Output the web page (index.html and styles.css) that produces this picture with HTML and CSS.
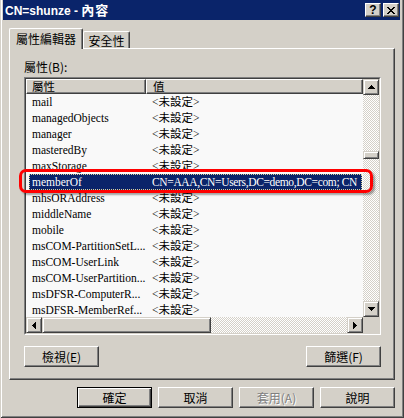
FILE: index.html
```html
<!DOCTYPE html>
<html lang="zh-Hant">
<head>
<meta charset="utf-8">
<title>CN=shunze - 內容</title>
<link rel="stylesheet" href="styles.css">
</head>
<body>
<div class="window">
  <div class="titlebar">
    <div class="title"><span class="lat">CN=shunze - </span><span class="cjk">內容</span></div>
    <div class="caption-btns">
      <div class="cbtn help">?</div>
      <div class="cbtn close">
        <svg width="8" height="7" viewBox="0 0 8 7" shape-rendering="crispEdges"><path fill="#000" d="M0 0h2v1h-2z M6 0h2v1h-2z M1 1h2v1h-2z M5 1h2v1h-2z M2 2h4v1h-4z M3 3h2v1h-2z M2 4h4v1h-4z M1 5h2v1h-2z M5 5h2v1h-2z M0 6h2v1h-2z M6 6h2v1h-2z"/></svg>
      </div>
    </div>
  </div>
  <div class="content">
    <div class="tabs">
      <div class="tab active">屬性編輯器</div>
      <div class="tab inactive">安全性</div>
    </div>
    <div class="panel">
      <div class="label">屬性(B):</div>
      <div class="list">
        <div class="list-inner">
          <div class="list-main">
            <div class="header">
              <div class="hcell c1">屬性</div>
              <div class="hcell c2">值</div>
            </div>
            <div class="rows">
              <div class="row"><span class="c1">mail</span><span class="c2">&lt;未設定&gt;</span></div>
              <div class="row"><span class="c1">managedObjects</span><span class="c2">&lt;未設定&gt;</span></div>
              <div class="row"><span class="c1">manager</span><span class="c2">&lt;未設定&gt;</span></div>
              <div class="row"><span class="c1">masteredBy</span><span class="c2">&lt;未設定&gt;</span></div>
              <div class="row"><span class="c1">maxStorage</span><span class="c2">&lt;未設定&gt;</span></div>
              <div class="row sel"><span class="c1">memberOf</span><span class="c2">CN=AAA,CN=Users,DC=demo,DC=com; CN</span></div>
              <div class="row"><span class="c1">mhsORAddress</span><span class="c2">&lt;未設定&gt;</span></div>
              <div class="row"><span class="c1">middleName</span><span class="c2">&lt;未設定&gt;</span></div>
              <div class="row"><span class="c1">mobile</span><span class="c2">&lt;未設定&gt;</span></div>
              <div class="row"><span class="c1">msCOM-PartitionSetL...</span><span class="c2">&lt;未設定&gt;</span></div>
              <div class="row"><span class="c1">msCOM-UserLink</span><span class="c2">&lt;未設定&gt;</span></div>
              <div class="row"><span class="c1">msCOM-UserPartition...</span><span class="c2">&lt;未設定&gt;</span></div>
              <div class="row"><span class="c1">msDFSR-ComputerR...</span><span class="c2">&lt;未設定&gt;</span></div>
              <div class="row"><span class="c1">msDFSR-MemberRef...</span><span class="c2">&lt;未設定&gt;</span></div>
            </div>
          </div>
          <div class="vscroll">
            <div class="sbtn"><svg width="7" height="4" viewBox="0 0 7 4" shape-rendering="crispEdges"><path fill="#000" d="M3 0h1v1h1v1h1v1h1v1H0V3h1V2h1V1h1z"/></svg></div>
            <div class="vtrack"><div class="sthumb vthumb"></div></div>
            <div class="sbtn"><svg width="7" height="4" viewBox="0 0 7 4" shape-rendering="crispEdges"><path fill="#000" d="M0 0h7v1H6v1H5v1H4v1H3V3H2V2H1V1H0z"/></svg></div>
          </div>
          <div class="hscroll">
            <div class="sbtn"><svg width="4" height="7" viewBox="0 0 4 7" shape-rendering="crispEdges"><path fill="#000" d="M3 0h1v7H3V6H2V5H1V4H0V3h1V2h1V1h1z"/></svg></div>
            <div class="sthumb hthumb"></div>
            <div class="htrack"></div>
            <div class="sbtn"><svg width="4" height="7" viewBox="0 0 4 7" shape-rendering="crispEdges"><path fill="#000" d="M0 0h1v1h1v1h1v1h1v1H3v1H2v1H1v1H0z"/></svg></div>
          </div>
          <div class="corner"></div>
        </div>
        <div class="highlight"></div>
      </div>
      <div class="panel-btns">
        <div class="btn">檢視(E)</div>
        <div class="btn">篩選(F)</div>
      </div>
    </div>
    <div class="dialog-btns">
      <div class="btn default">確定</div>
      <div class="btn">取消</div>
      <div class="btn disabled">套用(A)</div>
      <div class="btn">說明</div>
    </div>
  </div>
</div>
</body>
</html>
```

FILE: styles.css
```css
* { box-sizing: border-box; }
html, body { margin: 0; padding: 0; }
body {
  width: 404px;
  height: 418px;
  overflow: hidden;
  background: #d4d0c8;
  font-family: "Noto Sans CJK TC", "Liberation Sans", sans-serif;
  font-size: 12px;
  color: #000;
}
.window {
  width: 404px;
  height: 418px;
  padding: 0 4px 4px 3px;
  display: flex;
  flex-direction: column;
  background: #d4d0c8;
  box-shadow: inset 1px 0 #d4d0c8, inset -1px -1px #404040, inset 2px 0 #fff, inset -2px -2px #808080;
}
.titlebar {
  height: 20px;
  flex: none;
  background: #0a246a;
  display: flex;
  align-items: center;
  padding: 0 1px 0 2px;
  color: #fff;
}
.title { flex: 1; white-space: nowrap; line-height: 20px; }
.title .lat {
  font: bold 12px "Liberation Sans", sans-serif;
}
.title .cjk {
  font: bold 13px "Noto Sans CJK TC", sans-serif;
  letter-spacing: 1px;
}
.caption-btns { display: flex; gap: 2px; }
.cbtn {
  width: 16px;
  height: 14px;
  background: #d4d0c8;
  border: 1px solid;
  border-color: #fff #404040 #404040 #fff;
  box-shadow: inset -1px -1px #808080;
  display: flex;
  align-items: center;
  justify-content: center;
  color: #000;
}
.cbtn.help {
  font: bold 12px "Liberation Sans", sans-serif;
  line-height: 12px;
}
.content {
  flex: 1;
  display: flex;
  flex-direction: column;
  padding: 8px 5px 0 6px;
}
.tabs {
  display: flex;
  align-items: flex-end;
  height: 20px;
  flex: none;
}
.tab {
  background: #d4d0c8;
  border-top: 1px solid #fff;
  border-left: 1px solid #fff;
  border-right: 1px solid #404040;
  box-shadow: inset -1px 0 #808080;
  border-radius: 2px 2px 0 0;
  text-align: center;
  white-space: nowrap;
}
.tab.active {
  width: 74px;
  height: 21px;
  margin-bottom: -1px;
  line-height: 20px;
  position: relative;
  z-index: 1;
}
.tab.inactive {
  width: 47px;
  height: 17px;
  line-height: 17px;
}
.panel {
  flex: none;
  height: 332px;
  border: 1px solid;
  border-color: #fff #404040 #404040 #fff;
  box-shadow: inset -1px -1px #808080;
  padding: 11px 13px 12px 14px;
  display: flex;
  flex-direction: column;
}
.label { height: 14px; line-height: 14px; }
.list {
  position: relative;
  margin-top: 3px;
  width: 357px;
  height: 258px;
  border: 1px solid;
  border-color: #808080 #fff #fff #808080;
}
.list-inner {
  width: 355px;
  height: 256px;
  border: 1px solid;
  border-color: #404040 #d4d0c8 #d4d0c8 #404040;
  display: grid;
  grid-template-columns: 337px 16px;
  grid-template-rows: 238px 16px;
}
.list-main {
  background: #f9f9f9;
  overflow: hidden;
  display: flex;
  flex-direction: column;
}
.header { display: flex; height: 15px; flex: none; }
.hcell {
  height: 15px;
  background: #d4d0c8;
  border: 1px solid;
  border-color: #fff #404040 #404040 #fff;
  box-shadow: inset -1px -1px #808080;
  font-size: 11.5px;
  line-height: 13px;
  padding-left: 5px;
  white-space: nowrap;
}
.hcell.c1 { width: 120px; }
.hcell.c2 { flex: 1; padding-left: 6px; }
.rows { flex: 1; overflow: hidden; }
.row {
  display: flex;
  height: 16px;
  line-height: 16px;
  font-family: "Liberation Serif", "Noto Sans CJK TC", serif;
  font-size: 11.5px;
  white-space: nowrap;
  overflow: hidden;
}
.row .c1 { width: 120px; flex: none; padding-left: 6px; overflow: hidden; }
.row .c2 { flex: 1; padding-left: 6px; overflow: hidden; }
.row.sel {
  margin: 0 1px 0 3px;
  background: #0a246a;
  color: #fff;
  outline: 1px dotted #d8cf9a;
  outline-offset: -1px;
}
.row.sel .c1 { width: 117px; padding-left: 3px; }
.row.sel .c2 { letter-spacing: -0.35px; }
.vscroll {
  display: flex;
  flex-direction: column;
  background: repeating-conic-gradient(#fff 0 25%, #d4d0c8 0 50%) 0 0 / 2px 2px;
}
.vtrack { flex: 1; padding-top: 56px; }
.sbtn {
  width: 16px;
  height: 16px;
  flex: none;
  background: #d4d0c8;
  border: 1px solid;
  border-color: #d4d0c8 #404040 #404040 #d4d0c8;
  box-shadow: inset 1px 1px #fff, inset -1px -1px #808080;
  display: flex;
  align-items: center;
  justify-content: center;
}
.sthumb {
  background: #d4d0c8;
  border: 1px solid;
  border-color: #d4d0c8 #404040 #404040 #d4d0c8;
  box-shadow: inset 1px 1px #fff, inset -1px -1px #808080;
}
.vthumb { width: 16px; height: 8px; }
.hscroll {
  display: flex;
  background: repeating-conic-gradient(#fff 0 25%, #d4d0c8 0 50%) 0 0 / 2px 2px;
}
.hthumb { width: 169px; height: 16px; flex: none; }
.htrack { flex: 1; }
.corner { background: #d4d0c8; }
.highlight {
  position: absolute;
  left: -6px;
  top: 91px;
  width: 354px;
  height: 24px;
  border: 3px solid #ff0000;
  border-radius: 7px;
  box-shadow: 2px 2px 2px rgba(0, 0, 0, 0.35);
  pointer-events: none;
}
.panel-btns {
  display: flex;
  justify-content: space-between;
  margin-top: 11px;
}
.btn {
  width: 75px;
  height: 21px;
  background: #d4d0c8;
  border: 1px solid;
  border-color: #fff #404040 #404040 #fff;
  box-shadow: inset -1px -1px #808080;
  text-align: center;
  line-height: 19px;
  white-space: nowrap;
}
.btn.default {
  border-color: #000;
  box-shadow: inset 1px 1px #fff, inset -1px -1px #404040, inset -2px -2px #808080;
}
.btn.disabled {
  color: #808080;
  text-shadow: 1px 1px #fff;
}
.dialog-btns {
  display: flex;
  justify-content: flex-end;
  gap: 6px;
  margin-top: 7px;
}
```
